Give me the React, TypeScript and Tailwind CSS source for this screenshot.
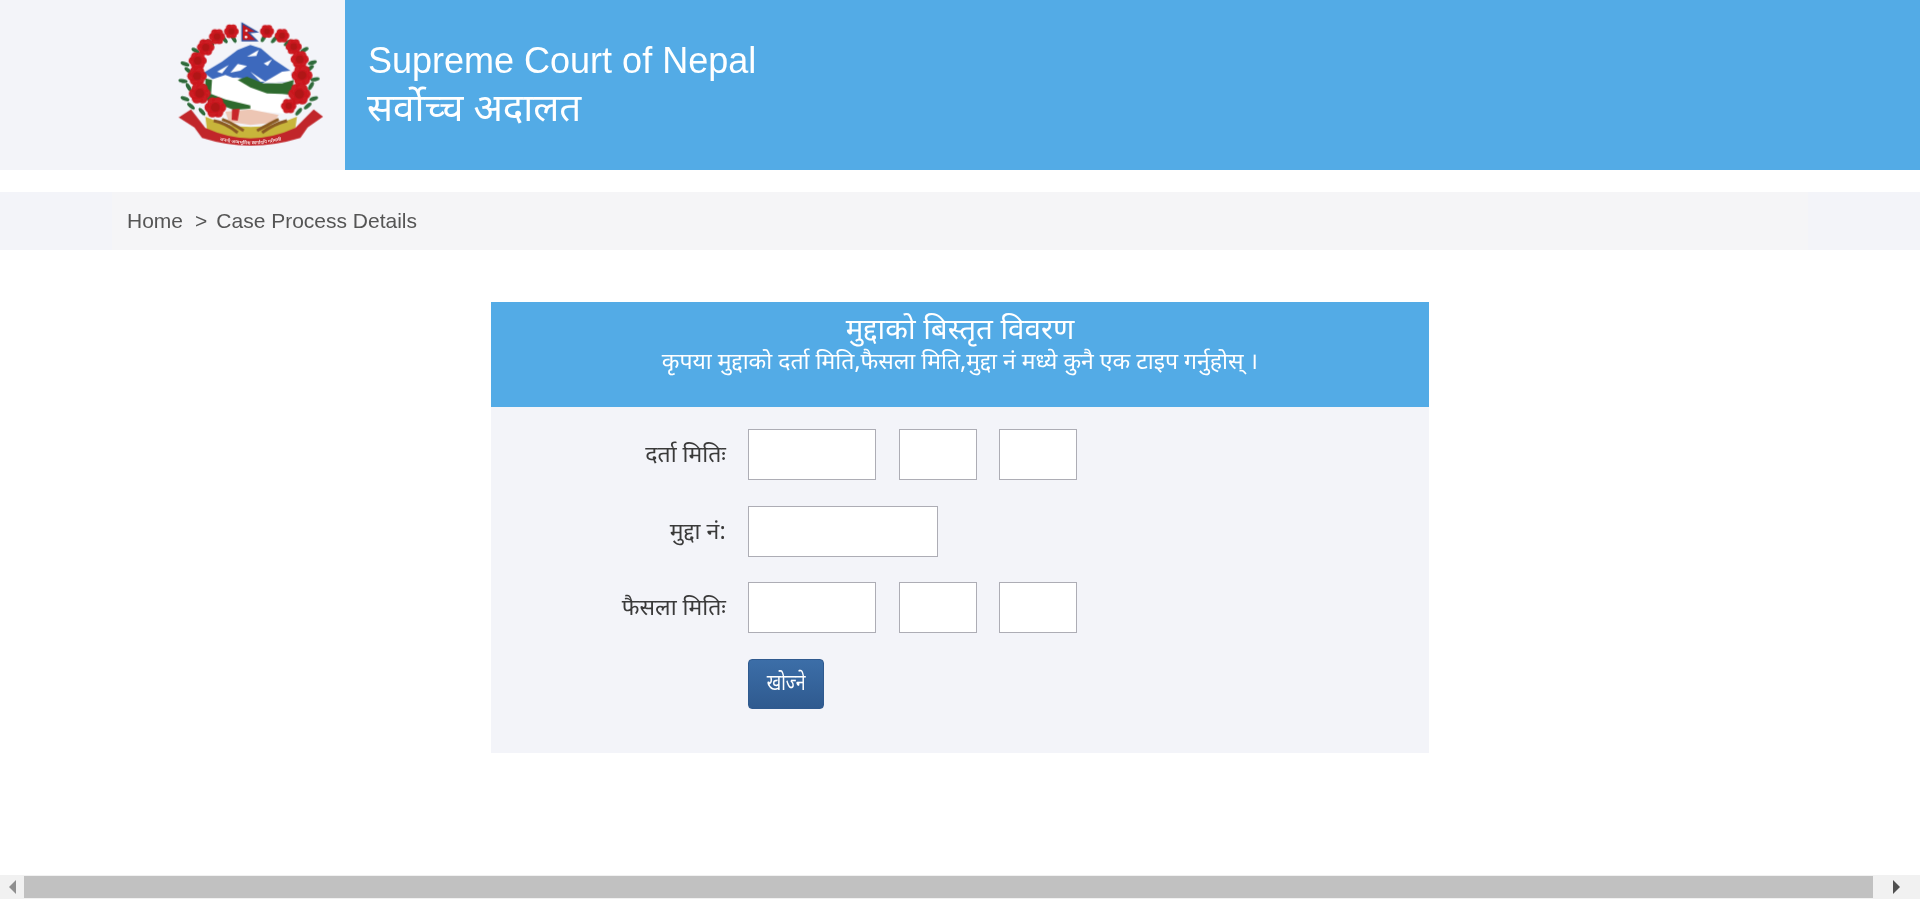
const DEV = '"Noto Sans Devanagari", "Nirmala UI", "Mangal", "Liberation Serif", "Noto Sans", serif';

const flowers: [number, number, number][] = [
  [243, 94, 21], [200, 110, 23], [166, 142, 25], [142, 182, 26], [140, 228, 28], [148, 280, 31], [195, 322, 31],
  [350, 94, 20], [395, 107, 21], [430, 140, 23], [448, 178, 26], [455, 226, 30], [447, 282, 32], [415, 318, 22],
];
const leaves: [number, number, number][] = [
  [222, 118, -40], [180, 128, -50], [136, 152, -60], [104, 192, -70], [98, 243, -80], [104, 296, -70], [122, 318, -50], [155, 335, -40], [115, 262, -30], [114, 212, -50],
  [372, 118, 40], [412, 128, 50], [462, 150, 60], [486, 188, 70], [494, 238, 80], [490, 296, 70], [472, 318, 50], [445, 335, 40], [482, 258, 30], [479, 205, 50], [340, 114, 30], [250, 116, -30],
];
const petals = [0, 60, 120, 180, 240, 300];

function Emblem() {
  return (
    <svg viewBox="80 60 450 390" className="w-[150px] h-[130px] block">
      <defs>
        <path id="ribbon" d="M150 402 Q300 464 452 402" />
        <filter id="soft" x="-5%" y="-5%" width="110%" height="110%">
          <feGaussianBlur stdDeviation="1.6" />
        </filter>
      </defs>
      <g filter="url(#soft)">
        {leaves.map(([x, y, r], i) => (
          <ellipse key={i} cx={x} cy={y} rx="6" ry="14" fill="#2f6b3a" transform={`rotate(${r} ${x} ${y})`} />
        ))}
        <path d="M160 218 L215 185 L262 150 L300 135 L332 145 L372 180 L420 212 L428 245 L340 250 L260 232 L190 240 Z" fill="#3d69bd" />
        <path d="M240 218 L262 192 L290 198 L270 212 Z M340 190 L365 178 L352 198 Z M290 170 L325 150 L318 168 Z M200 215 L235 195 L215 220 Z M300 215 L330 245 L345 245 Z M335 250 L395 215 L420 212 L428 245 Z" fill="#fff" />
        <path d="M180 240 L225 225 L265 240 L340 255 L410 250 L405 300 L400 340 L300 332 L230 300 L185 282 Z" fill="#fff" />
        <path d="M262 240 L290 230 L340 250 L395 250 L430 240 L425 285 L395 282 L350 280 L300 262 Z" fill="#2f6b2e" />
        <path d="M165 235 L185 240 L182 282 L225 298 L300 316 L300 326 L250 330 L225 320 L190 305 L165 300 Z" fill="#2f6b2e" />
        <path d="M225 335 L300 328 L385 345 L370 368 L300 375 L235 365 Z" fill="#edc6b4" />
        <path d="M245 328 L268 326 L262 362 L244 360 Z" fill="#c8262a" />
        <path d="M165 350 Q300 412 440 350 L432 405 Q300 432 172 405 Z" fill="#c8b53a" />
        <path d="M190 362 Q225 368 262 398 M215 358 Q240 366 280 392 M410 362 Q370 372 335 398 M385 358 Q360 370 320 392" stroke="#8a5a24" strokeWidth="9" fill="none" />
        <path d="M85 352 L122 328 L165 384 Q300 446 435 384 L490 328 L518 350 L472 382 L450 414 Q300 460 155 414 L132 382 Z" fill="#c1262b" />
        {flowers.map(([x, y, s], i) => (
          <g key={i}>
            {petals.map((a) => (
              <circle
                key={a}
                cx={x + Math.cos((a * Math.PI) / 180) * s * 0.55}
                cy={y + Math.sin((a * Math.PI) / 180) * s * 0.55}
                r={s * 0.5}
                fill="#cb1a20"
              />
            ))}
            <circle cx={x} cy={y} r={s * 0.45} fill="#b01419" />
          </g>
        ))}
        <path d="M275 70 L320 96 L295 98 L320 122 L275 122 Z" fill="#c4161c" stroke="#2c4f9e" strokeWidth="4" />
        <circle cx="288" cy="92" r="3.5" fill="#fff" />
        <circle cx="287" cy="111" r="4" fill="#fff" />
      </g>
      <text fontSize="14" fill="#f6dcdc" fontFamily={DEV} fontWeight="600">
        <textPath href="#ribbon" startOffset="50%" textAnchor="middle">जननी जन्मभूमिश्च स्वर्गादपि गरीयसी</textPath>
      </text>
    </svg>
  );
}

function Box({ w }: { w: string }) {
  return <input type="text" className={`${w} h-[51px] bg-white border border-[#adadb5] outline-none`} />;
}

function Row({ label, children }: { label: string; children: React.ReactNode }) {
  return (
    <div className="flex items-center h-[51px]">
      <label className="w-[235px] text-right text-[23px] leading-none text-[#3a3a3a] mr-[22px] pt-[3px]" style={{ fontFamily: DEV }}>{label}</label>
      {children}
    </div>
  );
}

function DateRow({ label }: { label: string }) {
  return (
    <Row label={label}>
      <div className="flex gap-[23px]">
        <Box w="w-[128px]" />
        <div className="flex gap-[22px]">
          <Box w="w-[78px]" />
          <Box w="w-[78px]" />
        </div>
      </div>
    </Row>
  );
}

export default function App() {
  return (
    <div className="w-[1920px] h-[900px] overflow-hidden bg-white flex flex-col font-['Liberation_Sans',Arial,sans-serif]">
      <header className="flex h-[170px] shrink-0">
        <div className="w-[345px] bg-[#f3f4f9] flex items-center pl-[177px]">
          <Emblem />
        </div>
        <div className="flex-1 bg-[#53abe6] text-white pl-[23px] pt-[38px]">
          <div className="text-[36px] leading-[45px]">Supreme Court of Nepal</div>
          <div className="text-[38.5px] leading-[46px] mt-[6px] -ml-[1px]" style={{ fontFamily: DEV }}>सर्वोच्च अदालत</div>
        </div>
      </header>

      <nav className="mt-[22px] h-[58px] shrink-0 bg-[#f3f4f9] px-[112px]">
        <div className="h-full bg-[#f5f5f7] px-[15px] flex items-center text-[21px] text-[#555]">
          <span>Home</span>
          <span className="ml-[12px]">&gt;</span>
          <span className="ml-[9px]">Case Process Details</span>
        </div>
      </nav>

      <main className="mt-[52px] w-[938px] mx-auto bg-[#f3f4f9]">
        <div className="h-[105px] bg-[#53abe6] text-white text-center pt-[13px]" style={{ fontFamily: DEV }}>
          <div className="text-[29.5px] leading-[34px]">मुद्दाको बिस्तृत विवरण</div>
          <div className="text-[23px] leading-[28px]">कृपया मुद्दाको दर्ता मिति,फैसला मिति,मुद्दा नं मध्ये कुनै एक टाइप गर्नुहोस् ।</div>
        </div>
        <form className="pt-[22px] pb-[44px] flex flex-col">
          <DateRow label="दर्ता मितिः" />
          <div className="mt-[26px]">
            <Row label="मुद्दा नं:"><Box w="w-[190px]" /></Row>
          </div>
          <div className="mt-[25px]">
            <DateRow label="फैसला मितिः" />
          </div>
          <div className="mt-[26px] ml-[257px]">
            <button type="button" className="w-[76px] h-[50px] rounded-[4px] border border-[#2f5a8f] bg-gradient-to-b from-[#3c6ea8] to-[#2f5a8f] text-white text-[22px] leading-none" style={{ fontFamily: DEV }}>
              <span className="inline-block scale-x-[0.8] translate-y-[1px]">खोज्ने</span>
            </button>
          </div>
        </form>
      </main>

      <div className="mt-auto h-[24px] shrink-0 bg-[#f1f1f1] flex items-center mb-px">
        <div className="w-[24px] flex justify-center">
          <svg width="7" height="14" viewBox="0 0 7 14"><path d="M7 0 L0 7 L7 14 Z" fill="#8f8f8f" /></svg>
        </div>
        <div className="w-[1849px] h-[22px] bg-[#c1c1c1]" />
        <div className="flex-1 flex justify-center">
          <svg width="7" height="14" viewBox="0 0 7 14"><path d="M0 0 L7 7 L0 14 Z" fill="#505050" /></svg>
        </div>
      </div>
    </div>
  );
}
